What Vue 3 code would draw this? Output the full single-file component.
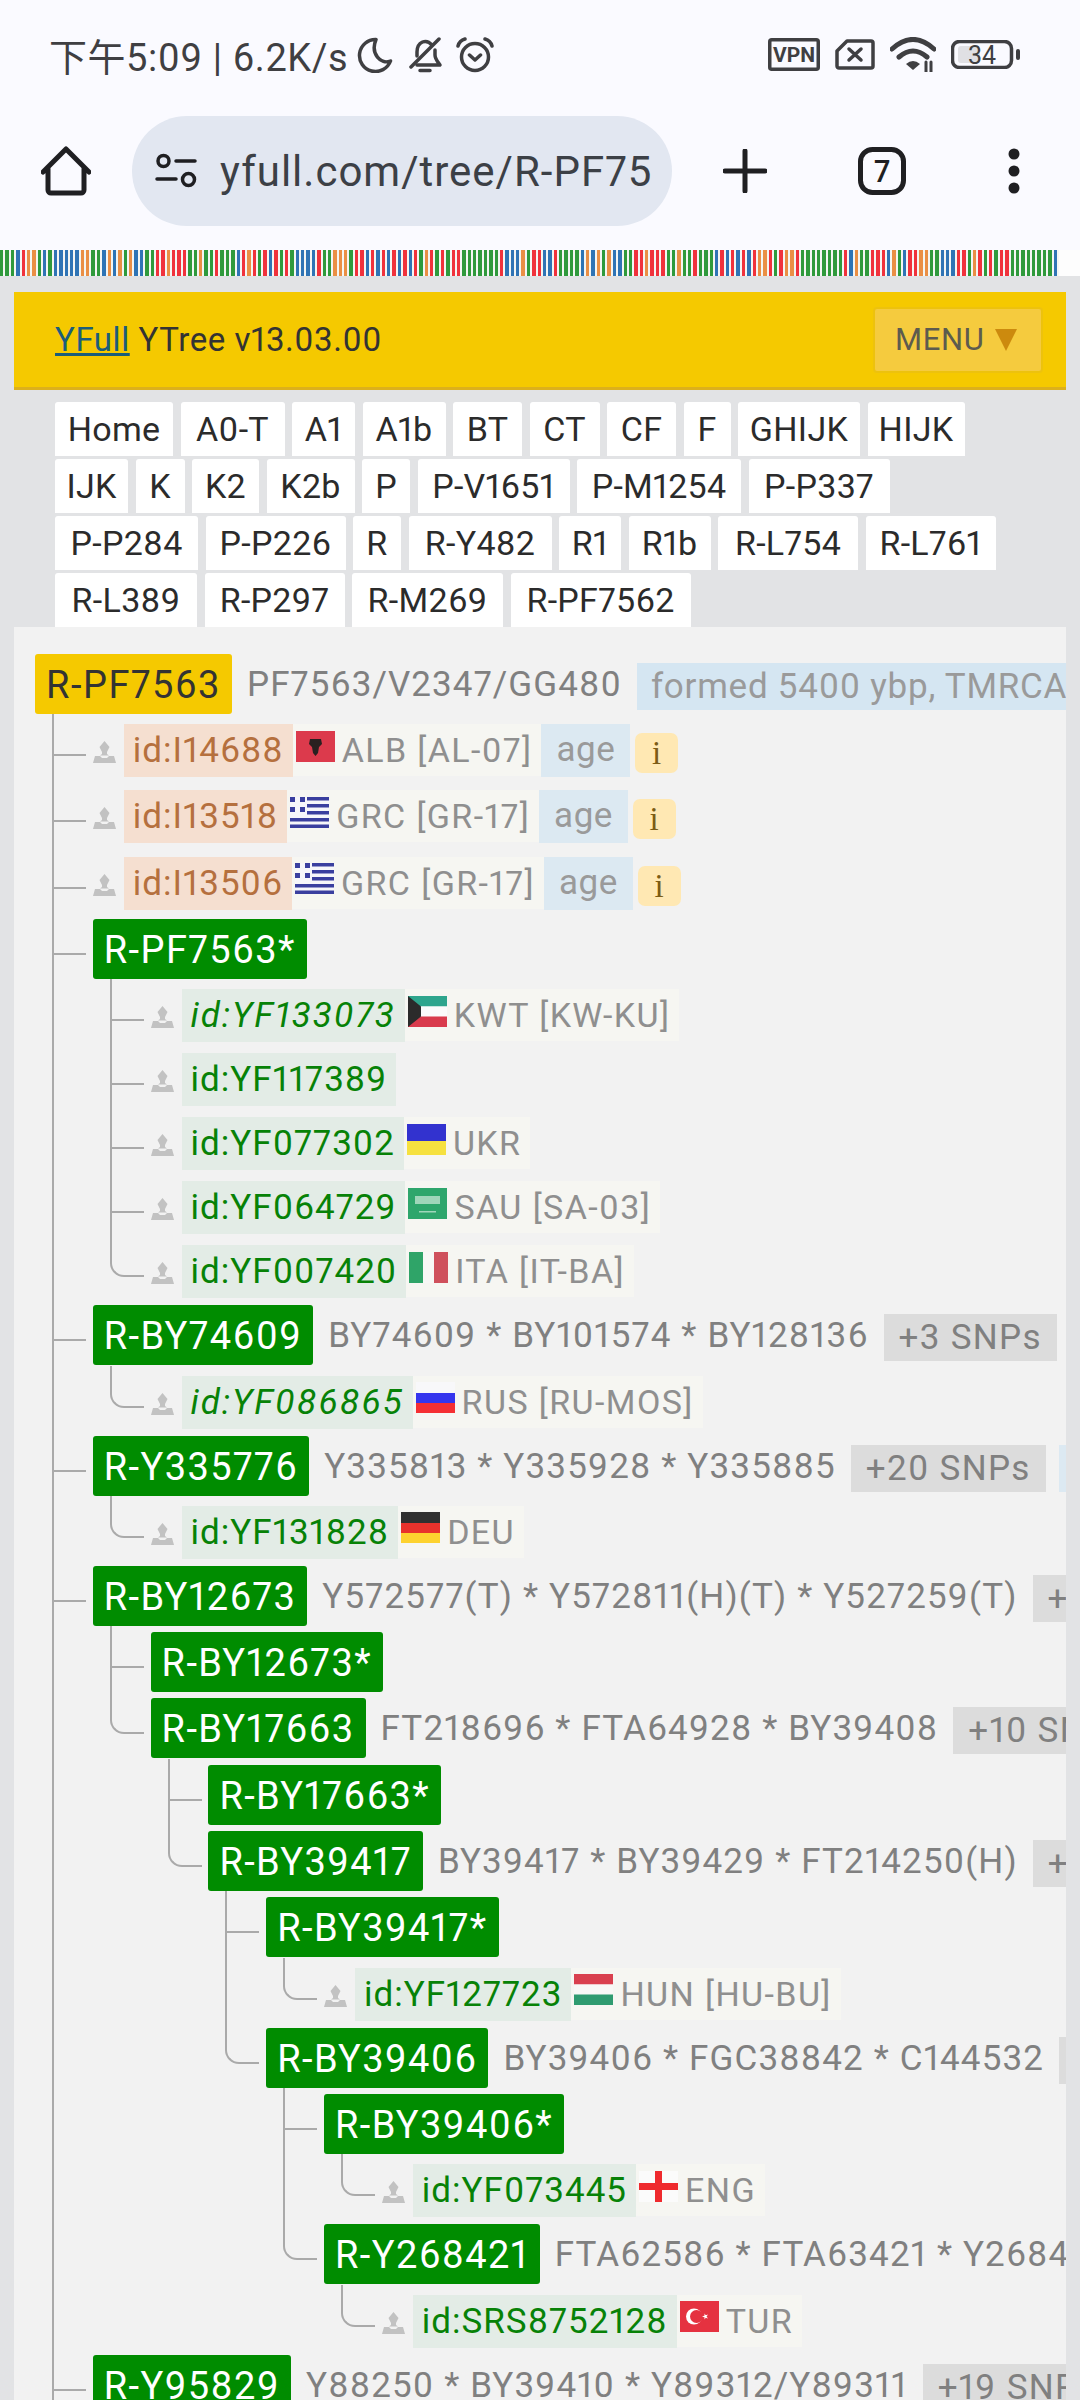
<template>
  <div class="page">
    <svg class="defs">
      <symbol id="flag-alb" viewBox="0 0 39 31">
        <rect width="39" height="31" fill="#dc3a4c" />
        <path d="M14 8h11l1 5-3 3-1 6-2.500 3-2.500-3-1-6-3-3z" fill="#2a2020" />
      </symbol>
      <symbol id="flag-grc" viewBox="0 0 39 31">
        <rect width="39" height="31" fill="#f6f6fa" />
        <path d="M17 0h22v3.500H17zM17 7h22v3.500H17zM17 14h22v3.500H17zM0 21h39v3.500H0zM0 27.500h39V31H0z" fill="#3a3f9f" />
        <path d="M0 0h5v5H0zM10 0h5v5h-5zM0 10h5v5H0zM10 10h5v5h-5z" fill="#3a3f9f" />
      </symbol>
      <symbol id="flag-kwt" viewBox="0 0 39 31">
        <rect width="39" height="10.500" fill="#2ea58d" />
        <rect y="10.500" width="39" height="10" fill="#fbfbfb" />
        <rect y="20.500" width="39" height="10.500" fill="#d93b4d" />
        <path d="M0 0l13 10.500v10L0 31z" fill="#2b2b2b" />
      </symbol>
      <symbol id="flag-ukr" viewBox="0 0 39 31">
        <rect width="39" height="17" fill="#3232cf" />
        <rect y="17" width="39" height="14" fill="#f6e13f" />
      </symbol>
      <symbol id="flag-sau" viewBox="0 0 39 31">
        <rect width="39" height="31" fill="#2ea66c" />
        <rect x="7" y="8" width="25" height="8" fill="#9fd6ba" />
        <rect x="11" y="23" width="17" height="1.500" fill="#9fd6ba" />
      </symbol>
      <symbol id="flag-ita" viewBox="0 0 39 31">
        <rect width="14" height="31" fill="#2fa468" />
        <rect x="14" width="11" height="31" fill="#f7f7f5" />
        <rect x="25" width="14" height="31" fill="#cf505c" />
      </symbol>
      <symbol id="flag-rus" viewBox="0 0 39 31">
        <rect width="39" height="11" fill="#f8f8fa" />
        <rect y="11" width="39" height="10" fill="#3535ee" />
        <rect y="21" width="39" height="10" fill="#f52f33" />
      </symbol>
      <symbol id="flag-deu" viewBox="0 0 39 31">
        <rect width="39" height="11" fill="#303030" />
        <rect y="11" width="39" height="10" fill="#e8322c" />
        <rect y="21" width="39" height="10" fill="#fdd22f" />
      </symbol>
      <symbol id="flag-hun" viewBox="0 0 39 31">
        <rect width="39" height="10.500" fill="#d9404f" />
        <rect y="10.500" width="39" height="10" fill="#f8f8f6" />
        <rect y="20.500" width="39" height="10.500" fill="#2f9b70" />
      </symbol>
      <symbol id="flag-eng" viewBox="0 0 39 31">
        <rect width="39" height="31" fill="#fbfbfb" />
        <rect x="16" width="7" height="31" fill="#ef2a2e" />
        <rect y="12" width="39" height="7" fill="#ef2a2e" />
      </symbol>
      <symbol id="flag-tur" viewBox="0 0 39 31">
        <rect width="39" height="31" fill="#e53240" />
        <circle cx="14" cy="15.500" r="8" fill="#fff" />
        <circle cx="16.500" cy="15.500" r="6.500" fill="#e53240" />
        <path d="M22 15.500l6-2-3.500 5v-6l3.500 5z" fill="#fff" />
      </symbol>
      <symbol id="person" viewBox="0 0 23 22">
        <path d="M11.500 0l5 6-2.500 5v2l2 1.500h-9l2-1.500v-2L6.500 6z" fill="#c2c2c2" />
        <path d="M2 15h5l2 2h5l2-2h5l2 7H0z" fill="#c2c2c2" />
      </symbol>
    </svg>

    <header class="chrome">
      <div class="status">
        <span class="clock">下午5:09 | 6.2K/s</span>
        <svg class="ico moon" width="36" height="36" viewBox="0 0 36 36">
          <path d="M19 2.500A16 16 0 1 0 33.500 24C24 28 13 17 19 2.500Z" />
        </svg>
        <svg class="ico bell" width="36" height="36" viewBox="0 0 36 36">
          <path d="M25 8C22 4.500 18 4 15.500 5 11 7 10 11 10 15v4M28 13v5c0 4 3 7 5 10H10" />
          <path d="M32 2L4 30M13 33.500h10" />
        </svg>
        <svg class="ico alarm" width="40" height="36" viewBox="0 0 40 36">
          <circle cx="20" cy="20" r="13.500" />
          <path d="M14.500 18l5.500 5 5.500-5M3 9a10 10 0 0 1 7-7M30 2a10 10 0 0 1 7 7" />
        </svg>
        <div class="status-right">
          <svg class="ico" width="52" height="33" viewBox="0 0 52 33">
            <rect x="1.750" y="1.750" width="48.500" height="29.500" rx="2" />
            <text x="26" y="23.500" text-anchor="middle" class="vpn">VPN</text>
          </svg>
          <svg class="ico" width="40" height="31" viewBox="0 0 40 31">
            <path d="M12 2h24a2 2 0 0 1 2 2v23a2 2 0 0 1-2 2H4a2 2 0 0 1-2-2V12z" />
            <path d="M14 10l12 11M26 10L14 21" />
          </svg>
          <svg class="ico" width="46" height="35" viewBox="0 0 46 35">
            <path class="wifi" d="M2 12Q23-7 44 12M9 20Q23 8 37 20" />
            <path class="solid" d="M16 27q7-6 14 0l-7 6z" />
            <path class="thin" d="M36 25v10M41 25v10" />
          </svg>
          <svg class="ico" width="69" height="29" viewBox="0 0 69 29">
            <rect x="1.500" y="1.500" width="59" height="26" rx="7" />
            <rect class="level" x="7" y="6" width="22" height="17" rx="3" />
            <text x="31" y="23.500" text-anchor="middle" class="pct">34</text>
            <rect class="solid" x="65" y="9" width="4" height="11" rx="2" />
          </svg>
        </div>
      </div>

      <div class="toolbar">
        <svg class="tool home" width="50" height="50" viewBox="0 0 50 50">
          <path d="M2 26L25 3l23 23M7 22v22a3 3 0 0 0 3 3h30a3 3 0 0 0 3-3V22" />
        </svg>
        <div class="url">
          <svg class="tool tune" width="42" height="36" viewBox="0 0 42 36">
            <circle cx="8.500" cy="8" r="5.500" />
            <circle cx="33.500" cy="26.500" r="6" />
            <path d="M21 8h19M2 26h19" />
          </svg>
          <span class="url-text">yfull.com/tree/R-PF75</span>
        </div>
        <svg class="tool plus" width="44" height="44" viewBox="0 0 44 44">
          <path d="M22 2v40M2 22h40" />
        </svg>
        <svg class="tool tabs" width="48" height="48" viewBox="0 0 48 48">
          <rect x="2.500" y="2.500" width="43" height="43" rx="12" />
          <text x="24" y="35" text-anchor="middle" class="tab-num">7</text>
        </svg>
        <svg class="tool more" width="12" height="46" viewBox="0 0 12 46">
          <circle class="solid" cx="6" cy="6" r="5.500" />
          <circle class="solid" cx="6" cy="23" r="5.500" />
          <circle class="solid" cx="6" cy="40" r="5.500" />
        </svg>
      </div>
    </header>

    <div class="dna">
      <i v-for="(c, i) in bars" :key="i" :style="{ background: c }"></i>
    </div>

    <div class="topbar">
      <div class="brand"><a class="brand-link">YFull</a> YTree v13.03.00</div>
      <div class="menu-btn">
        MENU
        <svg width="22" height="22" viewBox="0 0 22 22"><path d="M0 0h22L11 22z" fill="#cc8a0e" /></svg>
      </div>
    </div>

    <nav class="crumbs">
      <a v-for="c in crumbs" :key="c.label" :style="{ width: c.w + 'px' }">{{ c.label }}</a>
    </nav>

    <main class="panel">
      <div class="root">
        <span class="root-name">R-PF7563</span>
        <span class="note">PF7563/V2347/GG480</span>
        <span class="formed">formed 5400 ybp, TMRCA 4900 ybp</span>
      </div>
      <ul class="tree">
        <li v-for="r in rows" :key="r.key" class="row" :class="[r.kind, { wide: r.depth === 1 && r.kind === 'row-ind' }]" :style="{ paddingLeft: r.x + 'px' }">
          <i v-for="g in r.guides" :key="g" class="guide" :style="{ left: g + 'px' }"></i>
          <i class="elbow" :class="{ last: r.last }" :style="{ left: r.elbow + 'px' }"></i>

          <template v-if="r.kind === 'row-hap'">
            <span class="hap">{{ r.hap }}</span>
            <span v-if="r.note" class="note">{{ r.note }}</span>
            <span v-if="r.snps" class="snps">{{ r.snps }}</span>
            <span v-if="r.snps" class="age age-tail">formed</span>
          </template>

          <template v-else>
            <svg class="person" width="23" height="22"><use href="#person" /></svg>
            <span class="sample" :class="{ ancient: r.ancient, italic: r.em }">{{ r.id }}</span>
            <span v-if="r.flag" class="geo">
              <svg class="flag" width="39" height="31"><use :href="'#flag-' + r.flag" /></svg>
              {{ r.geo }}
            </span>
            <span v-if="r.ancient" class="age">age</span>
            <span v-if="r.ancient" class="info">i</span>
          </template>
        </li>
      </ul>
    </main>
  </div>
</template>

<script setup>
const palette = { G: '#2f9a3c', R: '#f0323c', B: '#2f74b5', O: '#ea8f45' }
const sequence =
  'GGGBROOGBGBBBBBOOGGBOBOGOBBGGRRORRRGGOGGRGGGBRORG' +
  'RBRGRGBBBBRGGOOOGRRBRBRBRBRBRGORGRGRRGGGGGGGRBBBO' +
  'GRRBBRGGGGBOBOGOBBGGRRORRRGGOGGRGGGBRBRBRBROORGRO' +
  'ORGGGGGGGGRBOGGRRRBOGBRROOGGBBBRRGORGRGRRGGGGGGGGB'
const bars = sequence.split('').map((c) => palette[c])

const crumbs = [
  ['Home', 118], ['A0-T', 104], ['A1', 63], ['A1b', 83], ['BT', 69], ['CT', 70],
  ['CF', 69], ['F', 47], ['GHIJK', 122], ['HIJK', 97],
  ['IJK', 73], ['K', 49], ['K2', 67], ['K2b', 88], ['P', 48], ['P-V1651', 152],
  ['P-M1254', 164], ['P-P337', 141],
  ['P-P284', 143], ['P-P226', 140], ['R', 48], ['R-Y482', 143], ['R1', 62],
  ['R1b', 82], ['R-L754', 140], ['R-L761', 130],
  ['R-L389', 142], ['R-P297', 140], ['R-M269', 151], ['R-PF7562', 180]
].map(([label, w]) => ({ label, w }))

const tree = [
  { id: 'id:I14688', ancient: true, flag: 'alb', geo: 'ALB [AL-07]' },
  { id: 'id:I13518', ancient: true, flag: 'grc', geo: 'GRC [GR-17]' },
  { id: 'id:I13506', ancient: true, flag: 'grc', geo: 'GRC [GR-17]' },
  {
    hap: 'R-PF7563*',
    kids: [
      { id: 'id:YF133073', em: true, flag: 'kwt', geo: 'KWT [KW-KU]' },
      { id: 'id:YF117389' },
      { id: 'id:YF077302', flag: 'ukr', geo: 'UKR' },
      { id: 'id:YF064729', flag: 'sau', geo: 'SAU [SA-03]' },
      { id: 'id:YF007420', flag: 'ita', geo: 'ITA [IT-BA]' }
    ]
  },
  {
    hap: 'R-BY74609',
    note: 'BY74609 * BY101574 * BY128136',
    snps: '+3 SNPs',
    kids: [{ id: 'id:YF086865', em: true, flag: 'rus', geo: 'RUS [RU-MOS]' }]
  },
  {
    hap: 'R-Y335776',
    note: 'Y335813 * Y335928 * Y335885',
    snps: '+20 SNPs',
    kids: [{ id: 'id:YF131828', flag: 'deu', geo: 'DEU' }]
  },
  {
    hap: 'R-BY12673',
    note: 'Y572577(T) * Y572811(H)(T) * Y527259(T)',
    snps: '+11 SNPs',
    kids: [
      { hap: 'R-BY12673*' },
      {
        hap: 'R-BY17663',
        note: 'FT218696 * FTA64928 * BY39408',
        snps: '+10 SNPs',
        kids: [
          { hap: 'R-BY17663*' },
          {
            hap: 'R-BY39417',
            note: 'BY39417 * BY39429 * FT214250(H)',
            snps: '+2 SNPs',
            kids: [
              {
                hap: 'R-BY39417*',
                kids: [{ id: 'id:YF127723', flag: 'hun', geo: 'HUN [HU-BU]' }]
              },
              {
                hap: 'R-BY39406',
                note: 'BY39406 * FGC38842 * C144532',
                snps: '+5 SNPs',
                kids: [
                  {
                    hap: 'R-BY39406*',
                    kids: [{ id: 'id:YF073445', flag: 'eng', geo: 'ENG' }]
                  },
                  {
                    hap: 'R-Y268421',
                    note: 'FTA62586 * FTA63421 * Y268421',
                    snps: '+4 SNPs',
                    kids: [{ id: 'id:SRS8752128', flag: 'tur', geo: 'TUR' }]
                  }
                ]
              }
            ]
          }
        ]
      }
    ]
  },
  { hap: 'R-Y95829', note: 'Y88250 * BY39410 * Y89312/Y89311', snps: '+19 SNPs' }
]

// flatten the tree; each row knows which guide lines pass through it
const INDENT = 57.8
const rows = []
function walk(list, depth, guides) {
  list.forEach((n, i) => {
    // the top level carries on below the fold, so it never closes
    const last = depth > 1 && i === list.length - 1
    const elbow = INDENT * (depth - 1) + 17
    rows.push({
      ...n,
      key: n.hap || n.id,
      kind: n.hap ? 'row-hap' : 'row-ind',
      depth,
      last,
      elbow,
      x: INDENT * depth,
      guides: last ? guides : [...guides, elbow]
    })
    if (n.kids) walk(n.kids, depth + 1, last ? guides : [...guides, elbow])
  })
}
walk(tree, 1, [])
</script>

<style>
html,
body {
  margin: 0;
  background: #e2e3e5;
}
</style>

<style scoped>
.page {
  height: 2400px;
  overflow: hidden;
  background: #e2e3e5;
  font-family: Roboto, "Noto Sans CJK SC", sans-serif;
  font-variant-numeric: proportional-nums;
  letter-spacing: 0.035em;
}

.defs {
  display: none;
}

.chrome {
  height: 250px;
  background: #fafaff;
}

.status {
  display: flex;
  align-items: center;
  height: 109px;
  padding-left: 49px;
  color: #3f3f42;
}

.clock {
  font-size: 38px;
  white-space: nowrap;
}

.ico {
  flex: none;
  fill: none;
  stroke: #3f3f42;
  stroke-width: 3.5;
  stroke-linecap: round;
  stroke-linejoin: round;
}

.ico .solid {
  fill: #3f3f42;
  stroke: none;
}

.ico .wifi {
  stroke-width: 5;
}

.ico .thin {
  stroke-width: 3;
}

.ico .level {
  fill: #e0e0e4;
  stroke: none;
}

.ico .vpn {
  fill: #3f3f42;
  stroke: none;
  font-size: 21px;
  font-weight: 700;
  letter-spacing: 0;
}

.ico .pct {
  fill: #3f3f42;
  stroke: none;
  font-size: 25px;
  letter-spacing: 0;
}

.moon {
  margin-left: 9px;
}

.bell {
  margin-left: 14px;
}

.alarm {
  margin-left: 12px;
}

.status-right {
  display: flex;
  align-items: center;
  gap: 15px;
  margin-left: auto;
  padding-right: 60px;
}

.toolbar {
  display: flex;
  align-items: center;
  height: 110px;
  margin-top: 7px;
  padding-left: 41px;
}

.tool {
  flex: none;
  fill: none;
  stroke: #1f1f22;
  stroke-width: 5;
  stroke-linecap: round;
  stroke-linejoin: round;
}

.tool .solid {
  fill: #1f1f22;
  stroke: none;
}

.tool .tab-num {
  fill: #1f1f22;
  stroke: none;
  font-size: 31px;
  font-weight: 500;
  letter-spacing: 0;
}

.url {
  display: flex;
  align-items: center;
  flex: none;
  width: 540px;
  height: 110px;
  box-sizing: border-box;
  margin-left: 41px;
  padding-left: 23px;
  background: #e2e7f1;
  border-radius: 55px;
}

.tune {
  stroke-width: 3.5;
}

.url-text {
  margin-left: 23px;
  color: #3c4046;
  font-size: 42px;
  letter-spacing: 1px;
  white-space: nowrap;
}

.plus {
  margin-left: 51px;
}

.tabs {
  margin-left: 91px;
}

.more {
  margin-left: 102px;
}

.dna {
  display: flex;
  height: 26px;
  overflow: hidden;
  background: #fdfdfd;
}

.dna i {
  flex: none;
  box-sizing: border-box;
  width: 5.38px;
  border-right: 2px solid #f4f6f4;
}

.topbar {
  display: flex;
  align-items: center;
  justify-content: space-between;
  box-sizing: border-box;
  height: 98px;
  margin: 16px 14px 0;
  padding: 0 23px 0 41px;
  background: #f5c900;
  border-bottom: 3px solid #dcb01c;
  color: #333;
  font-size: 33px;
}

.brand-link {
  color: #1b5d7a;
  text-decoration: underline;
}

.menu-btn {
  display: flex;
  align-items: center;
  justify-content: space-between;
  box-sizing: border-box;
  width: 170px;
  height: 66px;
  padding: 0 24px 0 20px;
  background: #f5cb3e;
  border: 2px solid #edc20d;
  border-radius: 4px;
  color: #5d5b4e;
  font-size: 31px;
  letter-spacing: 0.02em;
}

.crumbs {
  display: flex;
  flex-wrap: wrap;
  gap: 3px 7.5px;
  padding: 12px 60px 0 55px;
  letter-spacing: 0.3px;
}

.crumbs a {
  height: 54px;
  background: #fff;
  border-radius: 3px 3px 0 0;
  color: #2b2b2b;
  font-size: 34px;
  line-height: 54px;
  text-align: center;
}

.panel {
  height: 1773px;
  margin: 0 14px;
  padding: 27px 0 0 21px;
  overflow: hidden;
  background: #f2f2f2;
}

.root {
  display: flex;
  align-items: flex-start;
  height: 66px;
  white-space: nowrap;
}

.root-name {
  height: 60px;
  padding: 0 11px;
  background: #f5c900;
  border-radius: 3px;
  color: #333;
  font-size: 38px;
  letter-spacing: 1.5px;
  line-height: 62px;
}

.note {
  flex: none;
  margin-left: 15px;
  color: #808080;
  font-size: 35px;
  letter-spacing: 1.15px;
  line-height: 62px;
}

.root .note {
  letter-spacing: 1.1px;
}

.formed {
  height: 47px;
  margin: 9px 0 0 15px;
  padding: 0 14px;
  background: #d5e6f2;
  color: #9a9a9a;
  font-size: 35px;
  letter-spacing: 0.75px;
  line-height: 47px;
}

.tree {
  margin: 0;
  padding: 0;
  list-style: none;
}

.row {
  position: relative;
  display: flex;
  align-items: flex-start;
  white-space: nowrap;
}

.row-hap {
  height: 66.3px;
}

.row-ind {
  height: 64px;
  padding-top: 4px;
  box-sizing: border-box;
}

.row-ind.wide {
  height: 66.34px;
}

.guide {
  position: absolute;
  top: -6px;
  bottom: 0;
  width: 2px;
  background: #aaa;
}

.elbow {
  position: absolute;
  top: -6px;
  box-sizing: border-box;
  width: 34px;
  height: 42px;
  border-bottom: 2px solid #aaa;
}

.elbow.last {
  border-left: 2px solid #aaa;
  border-bottom-left-radius: 14px;
}

.hap {
  flex: none;
  height: 60px;
  padding: 0 11px;
  background: #008c00;
  border-radius: 3px;
  color: #fff;
  font-size: 38px;
  letter-spacing: 1.4px;
  line-height: 62px;
}

.snps {
  flex: none;
  height: 47px;
  margin: 9px 0 0 15px;
  padding: 0 15px;
  background: #dcdcdc;
  color: #808080;
  font-size: 35px;
  letter-spacing: 1.3px;
  line-height: 47px;
}

.person {
  flex: none;
  margin: 17px 8px 0 0;
}

.sample {
  height: 53px;
  padding: 0 9px;
  background: #e3ece6;
  color: #078207;
  font-size: 35px;
  letter-spacing: 1px;
  line-height: 53px;
}

.sample.ancient {
  background: #f5dfd0;
  color: #b5703e;
}

.sample.italic {
  font-style: italic;
  letter-spacing: 1.9px;
}

.geo {
  display: flex;
  align-items: center;
  height: 52px;
  padding: 0 9px 0 3px;
  background: #f6f6f2;
  color: #8f8f8f;
  font-size: 34px;
  letter-spacing: 1.4px;
}

.flag {
  flex: none;
  margin: -8px 7px 0 0;
}

.age {
  flex: none;
  height: 53px;
  padding: 0 15px;
  background: #dce9f2;
  color: #9a9a9a;
  font-size: 35px;
  line-height: 51px;
}

.age-tail {
  height: 47px;
  margin: 9px 0 0 13px;
  line-height: 47px;
}

.info {
  width: 43px;
  height: 40px;
  margin: 9px 0 0 5px;
  background: #ffe8b3;
  border-radius: 7px;
  color: #7c5c16;
  font-family: "Liberation Serif", serif;
  font-size: 33px;
  line-height: 40px;
  text-align: center;
}
</style>
